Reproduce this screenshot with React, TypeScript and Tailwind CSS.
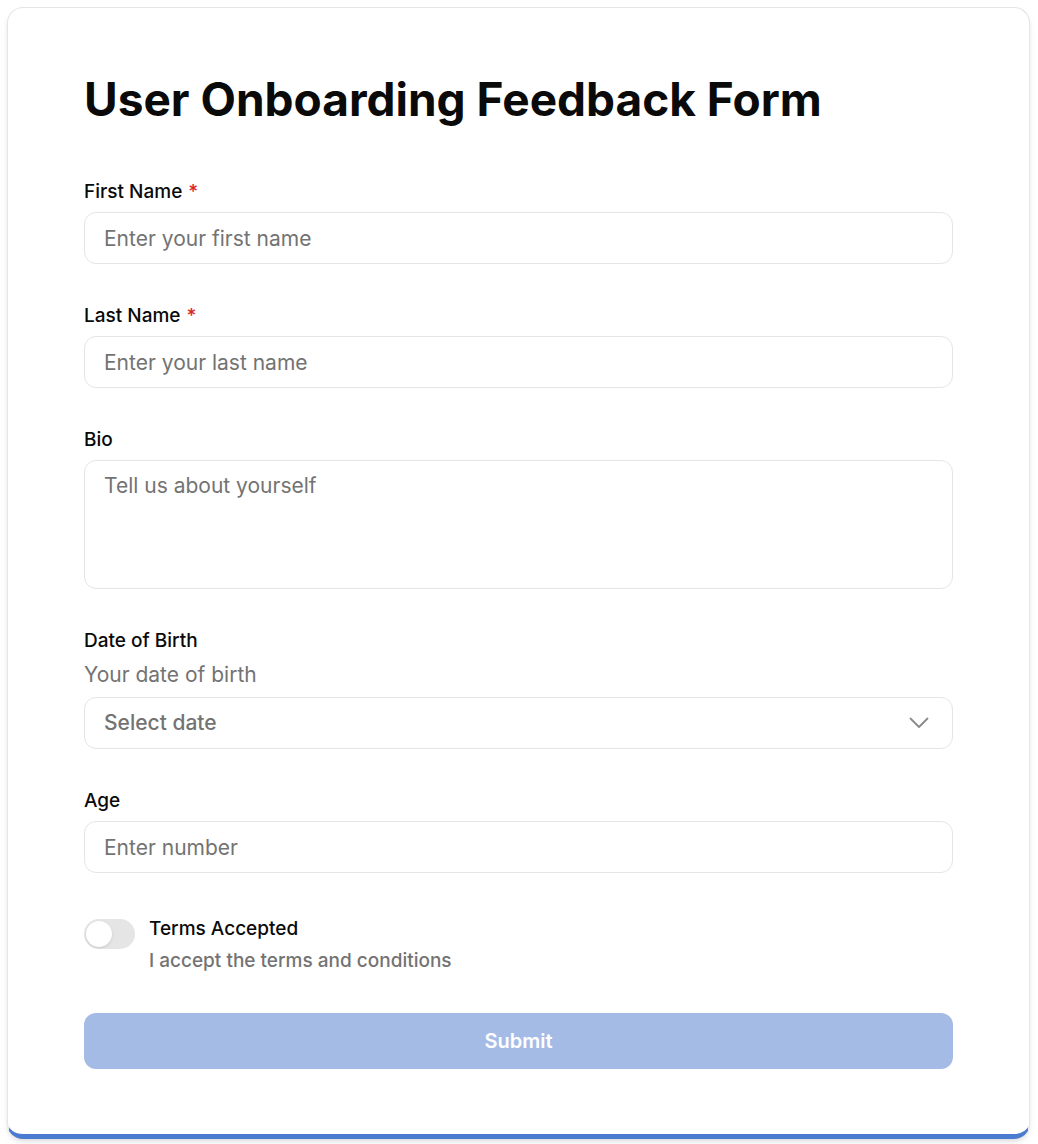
import React from "react";

function Label({ children, required }: { children: React.ReactNode; required?: boolean }) {
  return (
    <div className="text-[19px] leading-6 font-medium text-[#0a0a0a]">
      {children}
      {required && <span className="text-[#dc2626] ml-[6px]">*</span>}
    </div>
  );
}

const inputCls =
  "w-full h-[52px] rounded-xl border border-[#e5e5e5] bg-white px-[19px] text-[21px] text-[#0a0a0a] placeholder:text-[#737373] outline-none";

export default function App() {
  return (
    <div className="pl-[7px] pr-[8px] py-[7px] bg-white" style={{ fontFamily: "Inter, 'Noto Sans', sans-serif" }}>
      <div className="rounded-2xl border border-[#e5e5e5] border-b-[5px] border-b-[#4a7bd0] bg-white shadow-md px-[76px] pt-[64px] pb-[65px]">
        <h1 className="text-[46px] leading-[1.2] font-bold text-[#0a0a0a]">
          User Onboarding Feedback Form
        </h1>
        <div className="mt-[53px] flex flex-col gap-10">
          <div className="flex flex-col gap-2">
            <Label required>First Name</Label>
            <input className={inputCls} placeholder="Enter your first name" />
          </div>
          <div className="flex flex-col gap-2">
            <Label required>Last Name</Label>
            <input className={inputCls} placeholder="Enter your last name" />
          </div>
          <div className="flex flex-col gap-2">
            <Label>Bio</Label>
            <textarea
              className="w-full h-[129px] rounded-xl border border-[#e5e5e5] bg-white px-[19px] py-[11px] text-[21px] leading-7 text-[#0a0a0a] placeholder:text-[#737373] outline-none resize-none"
              placeholder="Tell us about yourself"
            />
          </div>
          <div className="flex flex-col gap-2">
            <Label>Date of Birth</Label>
            <div className="text-[21px] leading-7 text-[#737373]">Your date of birth</div>
            <div className="w-full h-[52px] rounded-xl border border-[#e5e5e5] bg-white pl-[19px] pr-[23px] flex items-center justify-between">
              <span className="text-[21px] font-medium text-[#737373]">Select date</span>
              <svg width="20" height="12" viewBox="0 0 20 12" fill="none">
                <polyline points="1.5,1.5 10,10 18.5,1.5" stroke="#8a8a8a" strokeWidth="1.8" strokeLinecap="round" strokeLinejoin="round" />
              </svg>
            </div>
          </div>
          <div className="flex flex-col gap-2">
            <Label>Age</Label>
            <input className={inputCls} placeholder="Enter number" />
          </div>
          <div className="flex items-start gap-[14px]">
            <div className="mt-[6px] w-[51px] h-[30px] rounded-full bg-[#e5e5e5] p-[2px] flex items-center">
              <div className="w-[26px] h-[26px] rounded-full bg-white shadow-sm" />
            </div>
            <div className="mt-[4px] flex flex-col gap-2">
              <div className="text-[19px] leading-6 font-medium text-[#0a0a0a]">Terms Accepted</div>
              <div className="text-[19px] leading-6 font-medium text-[#737373]">I accept the terms and conditions</div>
            </div>
          </div>
          <button className="w-full h-[56px] rounded-xl bg-[#a4bbe5] text-white text-[20px] font-semibold">
            Submit
          </button>
        </div>
      </div>
    </div>
  );
}
